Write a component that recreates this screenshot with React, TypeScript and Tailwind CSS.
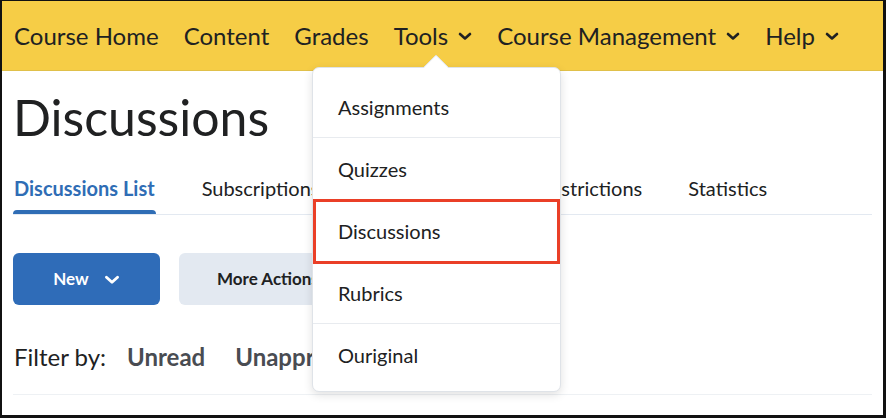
import React from "react";

const Chevron = ({ className = "" }: { className?: string }) => (
  <svg viewBox="0 0 14 9" className={className} fill="none" stroke="currentColor" strokeWidth="2.6" strokeLinecap="round" strokeLinejoin="round">
    <path d="M2 2 L7 6.5 L12 2" />
  </svg>
);

export default function App() {
  const nav = [
    { t: "Course Home" },
    { t: "Content" },
    { t: "Grades" },
    { t: "Tools", c: true },
    { t: "Course Management", c: true },
    { t: "Help", c: true },
  ];
  const items = ["Assignments", "Quizzes", "Discussions", "Rubrics", "Ouriginal"];
  return (
    <div
      className="relative w-[886px] h-[418px] overflow-hidden bg-white border-t border-l-2 border-r-[3px] border-b-[3px] border-[#111]"
      style={{ fontFamily: "Lato, 'Open Sans', sans-serif" }}
    >
      {/* Nav bar */}
      <div className="h-[70px] bg-[#f6cd46] flex items-center pl-[12px] gap-[25px] text-[24px] text-[#202122] border-b border-[#e0c04a]">
        {nav.map((n) => (
          <div key={n.t} className="flex items-center gap-[10px]">
            <span>{n.t}</span>
            {n.c && <Chevron className="w-[14px] h-[9px] mt-[2px]" />}
          </div>
        ))}
      </div>

      {/* Heading */}
      <div className="pl-[11px] pt-[11px] text-[50px] leading-[70px] text-[#202122]">Discussions</div>

      {/* Tabs */}
      <div className="mx-[11px] mt-[21px] flex gap-[46px] border-b border-[#e3e9f1] text-[20px] leading-[30px] text-[#202122]">
        <div className="relative pb-[11px] pl-[1px] pr-[1px] text-[#2f6db5] font-bold">
          Discussions List
          <div className="absolute left-0 right-0 bottom-0 h-[4px] bg-[#2f6db5] rounded-t-sm" />
        </div>
        <div>Subscriptions</div>
        <div className="pl-[5px]">Group and Section Restrictions</div>
        <div>Statistics</div>
      </div>

      {/* Buttons */}
      <div className="mx-[11px] mt-[38px] flex gap-[19px]">
        <div className="w-[147px] h-[52px] rounded-[6px] bg-[#2f6cb8] text-white font-bold text-[17px] flex items-center justify-center gap-[15px]">
          <span>New</span>
          <Chevron className="w-[16px] h-[10px] mt-[1px]" />
        </div>
        <div className="w-[170px] h-[52px] rounded-[6px] bg-[#e3e9f1] text-[#202122] font-bold text-[17px] flex items-center pl-[38px]">
          More Actions
        </div>
      </div>

      {/* Filter */}
      <div className="mx-[11px] mt-[34px] pb-[19px] flex items-center border-b border-[#eef1f4] text-[24px] leading-[36px] pl-[1px]">
        <span className="text-[#202122]">Filter by:</span>
        <span className="ml-[21px] font-bold text-[#494c52]">Unread</span>
        <span className="ml-[30px] font-bold text-[#494c52]">Unapproved</span>
      </div>

      {/* Dropdown menu */}
      <div className="absolute left-[310px] top-[66px] w-[249px] h-[325px] bg-white rounded-[7px] border border-[#dfe3e8] shadow-[0_3px_10px_rgba(0,0,0,0.12)] pt-[8px]">
        <div className="absolute left-[114px] top-[-10px] w-[18px] h-[18px] bg-white rotate-45 border-l border-t border-[#dfe3e8] rounded-tl-[2px]" />
        <div className="relative flex flex-col">
          {items.map((it, i) => (
            <div
              key={it}
              className={`relative h-[62px] flex items-center pl-[25px] text-[20px] text-[#202122] ${i < items.length - 1 ? "border-b border-[#e8ebef]" : ""}`}
            >
              {it}
              {it === "Discussions" && (
                <div className="absolute left-0 right-0 top-[-1px] bottom-[-3px] border-[3px] border-[#ea3f27]" />
              )}
            </div>
          ))}
        </div>
      </div>
    </div>
  );
}
